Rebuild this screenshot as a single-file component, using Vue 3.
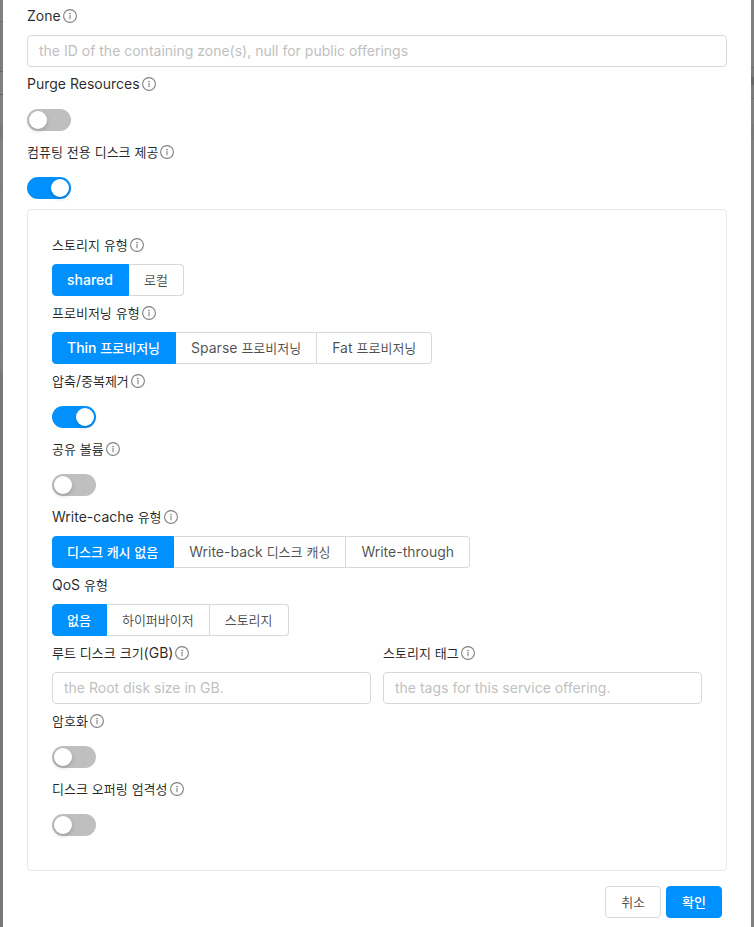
<script setup>
import { h, ref } from 'vue'

const hangul = /([\u3131-\u318e\uac00-\ud7a3]+)/

// Sets Hangul runs one step smaller than the Latin text beside them
const Mixed = ({ text }) =>
  text.split(hangul).filter(Boolean).map((part) =>
    hangul.test(part) ? h('span', { class: 'ko' }, part) : part)
Mixed.props = ['text']

const InfoIcon = () =>
  h('svg', { class: 'info', viewBox: '0 0 14 14', 'aria-hidden': 'true' }, [
    h('circle', { cx: 7, cy: 7, r: 6.4, fill: 'none', stroke: 'currentColor', 'stroke-width': 1.1 }),
    h('circle', { cx: 7, cy: 4.5, r: 0.85, fill: 'currentColor' }),
    h('path', { d: 'M7 6.1V10.3', stroke: 'currentColor', 'stroke-width': 1.1 }),
  ])

const topFields = ref([
  { id: 'zone', kind: 'input', label: 'Zone', info: true, value: '', hint: 'the ID of the containing zone(s), null for public offerings' },
  { id: 'purge', kind: 'switch', label: 'Purge Resources', info: true, value: false },
  { id: 'compute-only', kind: 'switch', label: '컴퓨팅 전용 디스크 제공', info: true, value: true },
])

const diskFields = ref([
  { id: 'storage-type', kind: 'radio', label: '스토리지 유형', info: true, value: 'shared', options: ['shared', '로컬'] },
  { id: 'provisioning', kind: 'radio', label: '프로비저닝 유형', info: true, value: 'Thin 프로비저닝', options: ['Thin 프로비저닝', 'Sparse 프로비저닝', 'Fat 프로비저닝'] },
  { id: 'dedup', kind: 'switch', label: '압축/중복제거', info: true, value: true },
  { id: 'shared-volume', kind: 'switch', label: '공유 볼륨', info: true, value: false },
  { id: 'write-cache', kind: 'radio', label: 'Write-cache 유형', info: true, value: '디스크 캐시 없음', options: ['디스크 캐시 없음', 'Write-back 디스크 캐싱', 'Write-through'] },
  { id: 'qos', kind: 'radio', label: 'QoS 유형', info: false, value: '없음', options: ['없음', '하이퍼바이저', '스토리지'] },
  { id: 'root-size', kind: 'input', half: true, label: '루트 디스크 크기(GB)', info: true, value: '', hint: 'the Root disk size in GB.' },
  { id: 'tags', kind: 'input', half: true, label: '스토리지 태그', info: true, value: '', hint: 'the tags for this service offering.' },
  { id: 'encrypt', kind: 'switch', label: '암호화', info: true, value: false },
  { id: 'strictness', kind: 'switch', label: '디스크 오퍼링 엄격성', info: true, value: false },
])

const groups = [
  { name: 'top', fields: topFields },
  { name: 'card', fields: diskFields },
]
</script>

<template>
  <div class="backdrop">
    <form class="modal" @submit.prevent>
      <div v-for="group in groups" :key="group.name" :class="['group', group.name]">
        <div
          v-for="field in group.fields.value"
          :key="field.id"
          :class="['field', { half: field.half }]"
          :role="field.kind === 'radio' ? 'radiogroup' : undefined"
          :aria-labelledby="field.kind === 'radio' ? field.id + '-label' : undefined"
        >
          <component
            :is="field.kind === 'radio' ? 'div' : 'label'"
            :id="field.id + '-label'"
            class="caption"
            :for="field.kind === 'radio' ? undefined : field.id"
          >
            <span><Mixed :text="field.label" /></span><InfoIcon v-if="field.info" />
          </component>

          <input v-if="field.kind === 'input'" :id="field.id" v-model="field.value" class="text" type="text" :placeholder="field.hint">

          <div v-else-if="field.kind === 'switch'" class="toggle">
            <input :id="field.id" v-model="field.value" class="switch" type="checkbox" role="switch">
          </div>

          <div v-else class="options">
            <label v-for="option in field.options" :key="option" :class="['option', { on: field.value === option }]">
              <input v-model="field.value" type="radio" :name="field.id" :value="option">
              <span><Mixed :text="option" /></span>
            </label>
          </div>
        </div>
      </div>

      <div class="actions">
        <button type="button" class="btn"><Mixed text="취소" /></button>
        <button type="submit" class="btn primary"><Mixed text="확인" /></button>
      </div>
    </form>
  </div>
</template>

<style>
body {
  background: #7f7f7f;
}
</style>

<style scoped>
.backdrop {
  min-height: 100vh;
  box-sizing: border-box;
  display: flex;
  padding: 0 3px;
  /* dimmed rows of the page behind the dialog, left edge then right edge */
  background:
    linear-gradient(
      #808080 21px, #6c6c6c 21px 22px, #7c7c7c 22px 71px, #646464 71px 72px,
      #808080 72px 94px, #646464 94px 95px, #808080 95px 124px, #797a7e 124px 140px,
      #808080 140px 187px, #787878 187px 188px, #808080 188px 346px, #767676 346px 347px,
      #808080 347px 371px, #78787b 371px) left / 3px 100% no-repeat,
    linear-gradient(
      #808080 67px, #6c6c6c 67px 68px, #7c7c7c 68px 77px, #696969 77px 85px,
      #7c7c7c 85px 98px, #6c6c6c 98px 99px, #808080 99px 124px, #7a7a7a 124px 140px,
      #808080 140px) right / 3px 100% no-repeat;
  font-family: Inter, "Noto Sans CJK KR", sans-serif;
  font-size: 14px;
  line-height: 22px;
  color: rgba(0, 0, 0, 0.85);
}
.modal {
  flex: 1;
  min-width: 0;
  box-sizing: border-box;
  padding: 5px 24px 9px;
  background: #fff;
}
.group {
  display: grid;
  grid-template-columns: 1fr 1fr;
  column-gap: 12px;
}
.card {
  padding: 24px;
  border: 1px solid #e8e8e8;
  border-radius: 4px;
}
.field {
  grid-column: 1 / -1;
  min-width: 0;
  padding-bottom: 6px;
}
.field.half {
  grid-column: auto;
}
.caption {
  display: flex;
  align-items: center;
  gap: 2px;
  height: 22px;
  margin-bottom: 8px;
  white-space: nowrap;
}
:deep(.ko) {
  font-size: 13px;
}
:deep(.info) {
  width: 14px;
  height: 14px;
  color: rgba(0, 0, 0, 0.5);
}
.text {
  display: block;
  box-sizing: border-box;
  width: 100%;
  height: 32px;
  padding: 0 11px 2px;
  border: 1px solid #d9d9d9;
  border-radius: 4px;
  background: #fff;
  font: inherit;
  color: inherit;
}
.text::placeholder {
  color: #bfbfbf;
  opacity: 1;
}
.toggle {
  display: flex;
  align-items: center;
  box-sizing: border-box;
  height: 32px;
  padding-top: 2px;
}
.switch {
  appearance: none;
  display: flex;
  box-sizing: border-box;
  width: 44px;
  height: 22px;
  margin: 0;
  padding: 2px;
  border-radius: 11px;
  background: #bfbfbf;
}
.switch::before {
  content: "";
  width: 18px;
  height: 18px;
  border-radius: 50%;
  background: #fff;
  box-shadow: 0 2px 4px rgba(0, 35, 11, 0.2);
}
.switch:checked {
  justify-content: flex-end;
  background: #0091ff;
}
.options {
  display: flex;
}
.option {
  position: relative;
  box-sizing: border-box;
  height: 32px;
  padding: 0 15px;
  border: 1px solid #d9d9d9;
  border-left-width: 0;
  line-height: 30px;
  white-space: nowrap;
  color: rgba(0, 0, 0, 0.7);
}
.option:first-child {
  padding-left: 14px;
  border-left-width: 1px;
  border-radius: 4px 0 0 4px;
}
.option:last-child {
  border-radius: 0 4px 4px 0;
}
.option.on {
  border-color: #0091ff;
  background: #0091ff;
  color: #fff;
  font-weight: 500;
}
.option input {
  position: absolute;
  opacity: 0;
  margin: 0;
}
.actions {
  display: flex;
  justify-content: flex-end;
  gap: 5px;
  padding: 15px 5px 0 0;
}
.btn {
  height: 32px;
  padding: 0 15px;
  border: 1px solid #d9d9d9;
  border-radius: 4px;
  background: #fff;
  font: inherit;
  color: rgba(0, 0, 0, 0.7);
}
.btn.primary {
  border-color: #0091ff;
  background: #0091ff;
  color: #fff;
  font-weight: 500;
}
</style>
